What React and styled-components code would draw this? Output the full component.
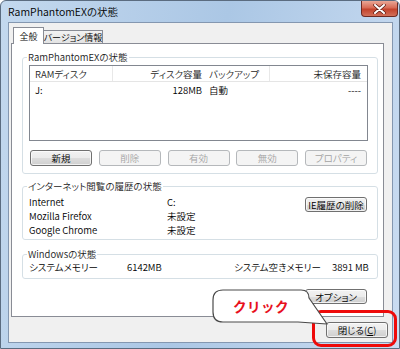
import React from 'react';
import styled, {createGlobalStyle} from 'styled-components';

const GlobalStyle = createGlobalStyle`
  html, body {
    margin: 0;
    padding: 0;
    background: #ffffff;
  }
`;

const Window = styled.div`
  position: relative;
  width: 400px;
  height: 349px;
  box-sizing: border-box;
  border: 1px solid #5b6c80;
  border-radius: 6px 6px 0 0;
  background: linear-gradient(100deg, #c3d8ee 0%, #abc7e5 50%, #cadcf1 100%);
  padding: 0 6px 5px 7px;
  display: flex;
  flex-direction: column;
  font-family: "Noto Sans CJK JP", "Noto Sans", sans-serif;
  font-feature-settings: "palt";
  font-weight: 350;
  color: #000;
  overflow: hidden;
`;

const TitleBar = styled.div`
  height: 21px;
  display: flex;
  align-items: flex-start;
  justify-content: space-between;
  margin-right: -5px;
`;

const Title = styled.div`
  font-size: 10.5px;
  line-height: 22px;
`;

const CloseBox = styled.div`
  width: 37px;
  height: 16px;
  box-sizing: border-box;
  border: 1px solid #6e2a22;
  border-top: none;
  border-radius: 0 0 4px 4px;
  background: linear-gradient(to bottom, #e9a796 0%, #d86b55 45%, #c3432c 55%, #d2705a 100%);
  display: flex;
  align-items: center;
  justify-content: center;
`;

const Client = styled.div`
  flex: 1;
  background: #f0f0f0;
  border: 1px solid #8497b0;
  padding: 4px 8px 0 2px;
  display: flex;
  flex-direction: column;
`;

const TabRow = styled.div`
  display: flex;
  align-items: flex-end;
  height: 17px;
  padding-left: 2px;
  margin-bottom: -1px;
  position: relative;
  z-index: 1;
`;

const Tab = styled.div`
  box-sizing: border-box;
  border: 1px solid #898c95;
  border-bottom: none;
  font-size: 9px;
  white-space: nowrap;
  display: flex;
  align-items: center;
  justify-content: center;
  width: ${p => p.$w}px;
  height: ${p => (p.$active ? 17 : 13)}px;
  margin-bottom: ${p => (p.$active ? 0 : 1)}px;
  margin-left: ${p => (p.$active ? 0 : -1)}px;
  background: ${p => (p.$active ? '#ffffff' : 'linear-gradient(to bottom, #f2f2f2, #e3e3e3)')};
  position: relative;
  z-index: ${p => (p.$active ? 2 : 1)};
`;

const Panel = styled.div`
  height: 274px;
  box-sizing: border-box;
  border: 1px solid #898c95;
  background: #ffffff;
  padding: 7px 5px 0 10px;
  display: flex;
  flex-direction: column;
`;

const Group = styled.fieldset`
  margin: ${p => p.$mt || 0}px 0 0 0;
  border: 1px solid #d5dfe5;
  border-radius: 3px;
  padding: 0 9px ${p => p.$pb || 0}px 6px;
  min-width: 0;
`;

const Legend = styled.legend`
  font-size: 9.5px;
  line-height: 12px;
  padding: 0 1px;
  margin-left: -2px;
  color: #1a1a1a;
`;

const List = styled.div`
  margin-top: 2px;
  height: 76px;
  box-sizing: border-box;
  border: 1px solid #828790;
  background: #ffffff;
`;

const ListLine = styled.div`
  display: grid;
  grid-template-columns: 83px 92px 65px 1fr;
  height: ${p => (p.$head ? 16 : 15)}px;
  box-sizing: border-box;
  border-bottom: ${p => (p.$head ? '1px solid #e5e5e5' : 'none')};
  font-size: 9.5px;
  color: ${p => (p.$head ? '#1e1e1e' : '#000')};
`;

const Cell = styled.div`
  display: flex;
  align-items: center;
  justify-content: ${p => (p.$right ? 'flex-end' : 'flex-start')};
  padding: 0 ${p => (p.$right ? p.$pad : 0)}px 0 ${p => (p.$right ? 0 : p.$pad)}px;
  border-right: ${p => (p.$div ? '1px solid #e8e8e8' : 'none')};
  white-space: nowrap;
`;

const ButtonRow = styled.div`
  margin-top: 9px;
  padding: 0 1px;
  display: flex;
  justify-content: space-between;
`;

const Button = styled.div`
  width: 62px;
  height: ${p => p.$h || 16}px;
  box-sizing: border-box;
  border: 1px solid ${p => (p.$disabled ? '#b5b8bb' : '#707070')};
  border-radius: 3px;
  background: ${p =>
    p.$disabled
      ? '#f4f4f4'
      : 'linear-gradient(to bottom, #f2f2f2 0%, #ebebeb 50%, #dddddd 50%, #cfcfcf 100%)'};
  color: ${p => (p.$disabled ? '#a3a3a3' : '#000')};
  font-size: 9.5px;
  display: flex;
  align-items: center;
  justify-content: center;
  white-space: nowrap;
  box-shadow: ${p => (p.$disabled ? 'none' : 'inset 0 0 0 1px rgba(255,255,255,0.7)')};
`;

const InfoBody = styled.div`
  display: flex;
  align-items: flex-start;
  margin-top: 3px;
`;

const InfoGrid = styled.div`
  flex: 1;
  display: grid;
  grid-template-columns: 138px 1fr;
  grid-auto-rows: 14px;
  font-size: 9.5px;
  align-items: center;
  white-space: nowrap;
`;

const SideButton = styled(Button)`
  margin-top: 2px;
  margin-right: 1px;
`;

const MemGrid = styled.div`
  display: grid;
  grid-template-columns: 98px 107px 98px 1fr;
  grid-auto-rows: 14px;
  font-size: 9.5px;
  align-items: center;
  white-space: nowrap;
`;

const OptionButton = styled(Button)`
  align-self: flex-end;
  margin-top: 10px;
  margin-right: 11px;
`;

const Footer = styled.div`
  display: flex;
  justify-content: flex-end;
  margin-top: 5px;
  margin-right: -4px;
`;

const Callout = styled.div`
  position: absolute;
  left: 211px;
  top: 288px;
  width: 120px;
  height: 40px;
`;

const CalloutText = styled.span`
  position: absolute;
  left: 0;
  top: 8px;
  width: 98px;
  text-align: center;
  font-size: 13.5px;
  line-height: 18px;
  font-weight: bold;
  font-feature-settings: normal;
  color: #e8101c;
  letter-spacing: 0.5px;
`;

const Highlight = styled.div`
  position: absolute;
  left: 311px;
  top: 309px;
  width: 85px;
  height: 37px;
  box-sizing: border-box;
  border: 3px solid #ee0a0a;
  border-radius: 9px;
`;

const CloseGlyph = () => (
  <svg width="13" height="10" viewBox="0 0 13 10">
    <path d="M2 1 L11 9 M11 1 L2 9" stroke="#5a1c14" strokeWidth="3.4" strokeLinecap="round" />
    <path d="M2 1 L11 9 M11 1 L2 9" stroke="#ffffff" strokeWidth="2" strokeLinecap="round" />
  </svg>
);

const BubbleShape = () => (
  <svg width="120" height="40" viewBox="0 0 120 40" style={{position: 'absolute', left: 0, top: 0}}>
    <path
      d="M11 1 H89 Q97 1 97 9 L115 35 L86 33 H11 Q1 33 1 23 V11 Q1 1 11 1 Z"
      fill="#ffffff"
      stroke="#4a4a4a"
      strokeWidth="1.2"
      strokeLinejoin="round"
    />
  </svg>
);

const buttons = [
  {label: '新規'},
  {label: '削除', disabled: true},
  {label: '有効', disabled: true},
  {label: '無効', disabled: true},
  {label: 'プロパティ', disabled: true},
];

const browsers = [
  ['Internet', 'C:'],
  ['Mozilla Firefox', '未設定'],
  ['Google Chrome', '未設定'],
];

export default function App() {
  return (
    <>
      <GlobalStyle />
      <Window>
        <TitleBar>
          <Title>RamPhantomEXの状態</Title>
          <CloseBox><CloseGlyph /></CloseBox>
        </TitleBar>
        <Client>
          <TabRow>
            <Tab $active $w={31}>全般</Tab>
            <Tab $w={60}>バージョン情報</Tab>
          </TabRow>
          <Panel>
            <Group $pb={7}>
              <Legend>RamPhantomEXの状態</Legend>
              <List>
                <ListLine $head>
                  <Cell $pad={5} $div>RAMディスク</Cell>
                  <Cell $right $pad={3}>ディスク容量</Cell>
                  <Cell $pad={4} $div>バックアップ</Cell>
                  <Cell $right $pad={6}>未保存容量</Cell>
                </ListLine>
                <ListLine>
                  <Cell $pad={5}>J:</Cell>
                  <Cell $right $pad={3}>128MB</Cell>
                  <Cell $pad={4}>自動</Cell>
                  <Cell $right $pad={6}>----</Cell>
                </ListLine>
              </List>
              <ButtonRow>
                {buttons.map(b => (
                  <Button key={b.label} $disabled={b.disabled}>{b.label}</Button>
                ))}
              </ButtonRow>
            </Group>

            <Group $mt={6} $pb={2}>
              <Legend>インターネット閲覧の履歴の状態</Legend>
              <InfoBody>
                <InfoGrid>
                  {browsers.map(([name, value]) => (
                    <React.Fragment key={name}>
                      <span>{name}</span>
                      <span>{value}</span>
                    </React.Fragment>
                  ))}
                </InfoGrid>
                <SideButton $h={15}>IE履歴の削除</SideButton>
              </InfoBody>
            </Group>

            <Group $mt={8} $pb={4}>
              <Legend>Windowsの状態</Legend>
              <MemGrid>
                <span>システムメモリー</span>
                <span>6142MB</span>
                <span>システム空きメモリー</span>
                <span>3891 MB</span>
              </MemGrid>
            </Group>

            <OptionButton $h={15}>オプション</OptionButton>
          </Panel>
          <Footer>
            <Button>閉じる(<u>C</u>)</Button>
          </Footer>
        </Client>

        <Highlight />
        <Callout>
          <BubbleShape />
          <CalloutText>クリック</CalloutText>
        </Callout>
      </Window>
    </>
  );
}
